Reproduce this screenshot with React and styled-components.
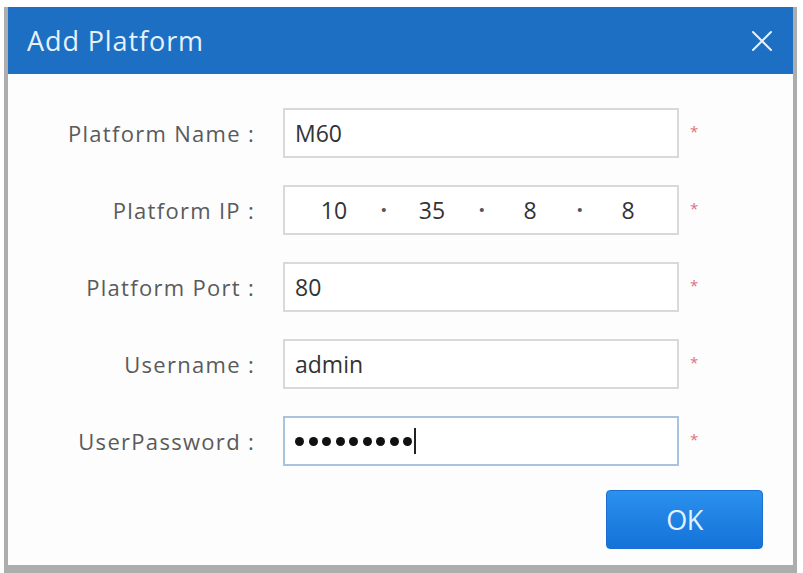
import React from "react";
import styled, { createGlobalStyle } from "styled-components";

const Global = createGlobalStyle`
  html, body {
    margin: 0;
    padding: 0;
    background: #ffffff;
  }
  body {
    font-family: "Open Sans", "Liberation Sans", sans-serif;
  }
`;

const Page = styled.div`
  width: 803px;
  height: 573px;
  overflow: hidden;
  padding: 7px 6px 0 4px;
  box-sizing: border-box;
`;

const Dialog = styled.div`
  border: 4px solid #adadad;
  border-top: 0;
  border-bottom-width: 14px;
  background: #fdfdfd;
  display: flex;
  flex-direction: column;
`;

const TitleBar = styled.div`
  height: 67px;
  background: #1c6fc2;
  display: flex;
  align-items: center;
  justify-content: space-between;
  padding: 0 20px 0 19px;
`;

const Title = styled.h1`
  margin: 0;
  font-family: "Open Sans", sans-serif;
  font-weight: 400;
  font-size: 27px;
  letter-spacing: 0.9px;
  color: #e6f1fc;
`;

const Close = styled.button`
  border: 0;
  background: none;
  padding: 0;
  width: 22px;
  height: 22px;
  display: flex;
  cursor: pointer;
`;

const Body = styled.div`
  padding: 34px 30px 16px 0;
  display: flex;
  flex-direction: column;
  gap: 27px;
`;

const Row = styled.div`
  display: grid;
  grid-template-columns: 247px 396px auto;
  column-gap: 28px;
  align-items: center;
  height: 50px;
`;

const Label = styled.label`
  text-align: right;
  font-size: 22px;
  letter-spacing: 1.3px;
  color: #5a5a5a;
  white-space: nowrap;
`;

const Field = styled.div`
  height: 50px;
  box-sizing: border-box;
  border: 2px solid ${(p) => (p.$focused ? "#a9c3df" : "#d9d9d9")};
  background: #ffffff;
  display: flex;
  align-items: center;
  padding: 0 10px;
  font-size: 23px;
  color: #333333;
`;

const IpField = styled(Field)`
  padding: 0;
  display: grid;
  grid-template-columns: repeat(4, 1fr);
`;

const Octet = styled.span`
  position: relative;
  text-align: center;
  &:not(:last-child)::after {
    content: "·";
    position: absolute;
    right: -4px;
    top: -1px;
    color: #555;
    font-weight: 700;
  }
`;

const Dots = styled.span`
  display: flex;
  gap: 4.5px;
  align-items: center;
`;

const Dot = styled.i`
  width: 9px;
  height: 9px;
  border-radius: 50%;
  background: #111;
`;

const Caret = styled.i`
  width: 2px;
  height: 26px;
  background: #222;
  margin-left: 2px;
`;

const Required = styled.span`
  color: #e0707e;
  font-size: 15px;
  margin-left: -17px;
  margin-top: -4px;
`;

const Actions = styled.div`
  display: flex;
  justify-content: flex-end;
  margin-top: -3px;
`;

const OkButton = styled.button`
  width: 157px;
  height: 59px;
  border: 1px solid #1a6fd0;
  border-radius: 4px;
  background: linear-gradient(#2b91ee, #1472d8);
  color: #e4f1ff;
  font-family: "Open Sans", sans-serif;
  font-size: 27px;
  letter-spacing: -0.5px;
  cursor: pointer;
`;

const fields = [
  { label: "Platform Name :", value: "M60" },
  { label: "Platform IP :", ip: ["10", "35", "8", "8"] },
  { label: "Platform Port :", value: "80" },
  { label: "Username :", value: "admin" },
  { label: "UserPassword :", password: 9 },
];

export default function App() {
  return (
    <Page>
      <Global />
      <Dialog>
        <TitleBar>
          <Title>Add Platform</Title>
          <Close aria-label="close">
            <svg width="22" height="22" viewBox="0 0 22 22">
              <path
                d="M2 2 L20 20 M20 2 L2 20"
                stroke="#e6f1fc"
                strokeWidth="2"
                strokeLinecap="round"
              />
            </svg>
          </Close>
        </TitleBar>
        <Body>
          {fields.map((f) => (
            <Row key={f.label}>
              <Label>{f.label}</Label>
              {f.ip ? (
                <IpField>
                  {f.ip.map((o, i) => (
                    <Octet key={i}>{o}</Octet>
                  ))}
                </IpField>
              ) : f.password ? (
                <Field $focused>
                  <Dots>
                    {Array.from({ length: f.password }).map((_, i) => (
                      <Dot key={i} />
                    ))}
                  </Dots>
                  <Caret />
                </Field>
              ) : (
                <Field>{f.value}</Field>
              )}
              <Required>*</Required>
            </Row>
          ))}
          <Actions>
            <OkButton>OK</OkButton>
          </Actions>
        </Body>
      </Dialog>
    </Page>
  );
}
